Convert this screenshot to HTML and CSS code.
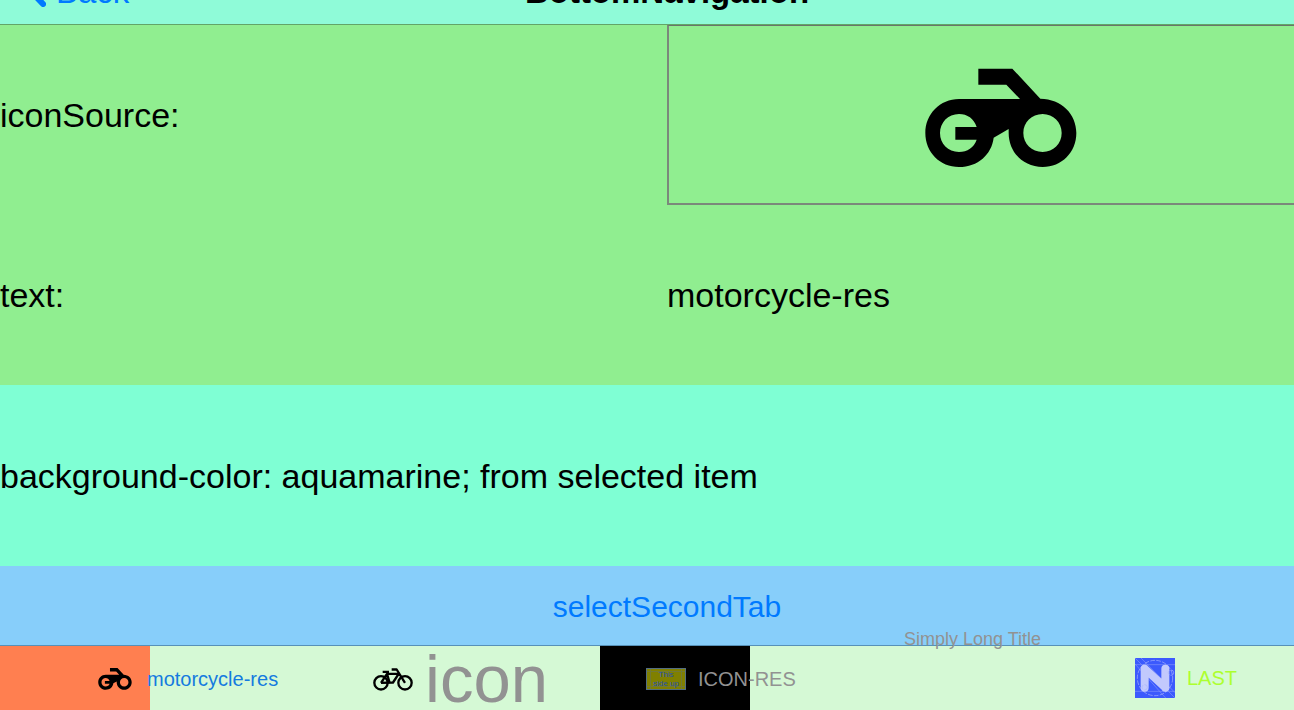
FILE: index.html
```
<!DOCTYPE html>
<html lang="en">
<head>
<meta charset="utf-8">
<title>BottomNavigation</title>
<link rel="stylesheet" href="styles.css">
</head>
<body>
<svg class="defs" aria-hidden="true">
  <symbol id="motorcycle" viewBox="0 0 456 298">
    <path fill-rule="evenodd" d="M160 1H262L346 91C410 92 454 137 454 194C454 252 410 296 353 296C295 296 251 252 251 194V182L206 208C200 258 159 296 102 296C45 296 1 252 1 194C1 137 45 92 102 92H285L244 49H160ZM102 137C69 137 45 163 45 194C45 226 69 251 102 251C127 251 147 237 155 214H91V176H155C147 151 127 137 102 137ZM353 137C320 137 295 162 295 194C295 226 320 251 353 251C385 251 410 226 410 194C410 162 385 137 353 137Z"/>
  </symbol>
</svg>
<div class="app">
  <header class="nav">
    <a class="back" href="#">
      <svg class="chevron" viewBox="0 0 24 42" aria-hidden="true"><path d="M21 3L4 21L21 39"/></svg>
      <span>Back</span>
    </a>
    <h1 class="title">BottomNavigation</h1>
  </header>
  <main class="content">
    <section class="details">
      <div class="cell">iconSource:</div>
      <div class="cell preview"><svg class="big-icon" role="img" aria-label="motorcycle"><use href="#motorcycle"/></svg></div>
      <div class="cell">text:</div>
      <div class="cell">motorcycle-res</div>
    </section>
    <div class="cell note">background-color: aquamarine; from selected item</div>
    <button class="select" type="button">selectSecondTab</button>
  </main>
  <nav class="tabs">
    <a class="tab coral" href="#">
      <svg class="moto" aria-hidden="true"><use href="#motorcycle"/></svg>
      <span class="label active">motorcycle-res</span>
    </a>
    <a class="tab bike-tab" href="#">
      <svg class="bike" viewBox="0 0 120 68" aria-hidden="true"><circle cx="24" cy="44" r="20"/><circle cx="96" cy="44" r="20"/><path d="M24 44L42 17H77L60 43L24 44M42 17L49 41M29 11H48M56 4H71L96 44"/></svg>
      <span class="label large">icon</span>
    </a>
    <a class="tab black" href="#">
      <svg class="sign" viewBox="0 0 40 22" aria-hidden="true"><rect class="panel" x=".5" y=".5" width="39" height="21"/><path class="rules" d="M4.500 1V21M35.500 1V21M1 3.500H39M1 18.500H39"/><text x="20" y="9">This</text><text x="20" y="18">side up</text></svg>
      <span class="label">ICON-RES</span>
    </a>
    <a class="tab raised" href="#"><span class="label long">Simply Long Title</span></a>
    <a class="tab last" href="#">
      <svg class="logo" viewBox="0 0 120 120" aria-hidden="true"><rect class="logo-bg" width="120" height="120"/><path class="guides" d="M0 20H120M0 100H120M0 0L120 120M18 0L120 104M0 18L92 120"/><circle class="ring" cx="60" cy="60" r="53"/><path class="mark" d="M29 32V89M91 32V89M29 32L91 89"/><circle class="ring" cx="108" cy="44" r="8"/><circle class="ring" cx="29" cy="88" r="8"/></svg>
      <span class="label lime">LAST</span>
    </a>
  </nav>
</div>
</body>
</html>
```
FILE: styles.css
```
* { box-sizing: border-box; }
html, body { height: 100%; }
body {
  margin: 0;
  overflow: hidden;
  background: #7fffd4;
  color: #000;
  font: 34px/40px "Liberation Sans", Arial, sans-serif;
}
a { text-decoration: none; color: #007aff; }
.defs { position: absolute; width: 0; height: 0; }
/* The scene is slightly wider than the window and clips on the right. */
.app {
  display: flex;
  flex-direction: column;
  width: calc(100% + 40px);
  height: 100%;
}
/* Scrolled part-way out: the bar's contents hang from its bottom edge. */
.nav {
  display: grid;
  grid-template-columns: 1fr auto 1fr;
  align-items: end;
  align-content: end;
  flex: none;
  height: 25px;
  padding-bottom: 12px;
  overflow: hidden;
  background: #8ffbd8;
  border-bottom: 1px solid #62a568;
  font-size: 33px;
}
.back { display: flex; align-items: flex-end; gap: 10px; padding-left: 22px; }
.chevron { width: 24px; height: 42px; margin-bottom: 5px; fill: none; stroke: #007aff; stroke-width: 6; stroke-linecap: round; }
.title { margin: 0; font-size: 33px; line-height: 40px; font-weight: bold; }
.content { display: flex; flex-direction: column; flex: 1; min-height: 0; }
.details {
  display: grid;
  grid-template-columns: 1fr 1fr;
  grid-template-rows: 1fr 1fr;
  flex: 360;
  background: #90ee90;
}
.cell { display: flex; align-items: center; }
.preview { justify-content: center; border: 2px solid #7b887b; border-top: 1px solid #6b756b; }
.big-icon { width: 152px; height: 100px; margin-top: 6px; }
.note { flex: 181; background: #7fffd4; }
.select {
  flex: 77;
  padding: 2px 0 0;
  border: 0;
  background: #87cefa;
  color: #007aff;
  font: 30px/36px "Liberation Sans", Arial, sans-serif;
}
.tabs {
  display: grid;
  grid-template-columns: 300fr 300fr 300fr 150fr 284fr;
  flex: none;
  height: 65px;
  background: #d5f9d5;
  border-top: 1px solid #5791b8;
}
.tab { display: flex; align-items: center; padding-top: 2px; }
.label { color: #929292; font-size: 20px; line-height: 24px; white-space: nowrap; }
.coral { gap: 15px; padding-left: 98px; background: linear-gradient(90deg, #ff7f50 50%, transparent 50%); }
.moto { width: 34px; height: 22px; }
.active { color: #147bdf; }
.bike-tab { gap: 12px; padding-left: 73px; }
.bike { width: 40px; height: 23px; fill: none; stroke: #000; stroke-width: 7; stroke-linejoin: round; }
.large { font-size: 67px; line-height: 60px; }
.black { gap: 12px; padding-left: 46px; background: linear-gradient(90deg, #000 50%, transparent 50%); }
.sign { width: 40px; height: 22px; }
.panel { fill: #808000; stroke: #536e83; }
.rules { stroke: #68765a; stroke-width: 1; opacity: .6; }
.sign text { fill: #2450b4; font: 8px "Liberation Sans", Arial, sans-serif; text-anchor: middle; }
.raised { align-items: flex-start; padding: 0 0 0 4px; }
.long { height: 22px; margin-top: -19px; overflow: hidden; font-size: 18px; }
.last { gap: 12px; padding: 0 0 0 85px; }
.logo { width: 40px; height: 40px; }
.logo-bg { fill: #3c5afd; }
.guides { fill: none; stroke: #8093fc; stroke-width: 2; }
.ring { fill: none; stroke: #a8b4fc; stroke-width: 2; stroke-dasharray: 14 4; }
.mark { fill: none; stroke: #c2c9fd; stroke-width: 24; stroke-linecap: round; }
.lime { color: #adff2f; }
```
